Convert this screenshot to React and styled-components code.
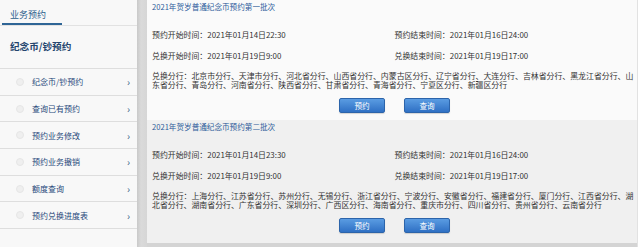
import React from "react";
import styled, { createGlobalStyle } from "styled-components";

const GlobalStyle = createGlobalStyle`
  html, body {
    margin: 0;
    padding: 0;
    background: #ffffff;
  }
  body {
    font-family: "Noto Sans CJK SC", "Noto Sans", sans-serif;
  }
`;

const batches = [
    {
        title: "2021年贺岁普通纪念币预约第一批次",
        bookStart: "2021年01月14日22:30",
        bookEnd: "2021年01月16日24:00",
        swapStart: "2021年01月19日9:00",
        swapEnd: "2021年01月19日17:00",
        branches:
            "北京市分行、天津市分行、河北省分行、山西省分行、内蒙古区分行、辽宁省分行、大连分行、吉林省分行、黑龙江省分行、山东省分行、青岛分行、河南省分行、陕西省分行、甘肃省分行、青海省分行、宁夏区分行、新疆区分行",
        tone: "#fafafa",
    },
    {
        title: "2021年贺岁普通纪念币预约第二批次",
        bookStart: "2021年01月14日23:30",
        bookEnd: "2021年01月16日24:00",
        swapStart: "2021年01月19日9:00",
        swapEnd: "2021年01月19日17:00",
        branches:
            "上海分行、江苏省分行、苏州分行、无锡分行、浙江省分行、宁波分行、安徽省分行、福建省分行、厦门分行、江西省分行、湖北省分行、湖南省分行、广东省分行、深圳分行、广西区分行、海南省分行、重庆市分行、四川省分行、贵州省分行、云南省分行",
        tone: "#f0f0f0",
    },
];

const menu = ["纪念币/钞预约", "查询已有预约", "预约业务修改", "预约业务撤销", "额度查询", "预约兑换进度表"];

const App = () => {
    return (
        <>
            <GlobalStyle />
            <SPage>
                <SSidebar>
                    <STabBar>
                        <STab>业务预约</STab>
                    </STabBar>
                    <SSideTitle>纪念币/钞预约</SSideTitle>
                    <SMenu>
                        {menu.map((item) => (
                            <SMenuItem key={item}>
                                <SDot />
                                <SMenuText>{item}</SMenuText>
                                <SChevron>›</SChevron>
                            </SMenuItem>
                        ))}
                    </SMenu>
                </SSidebar>
                <SGutter />
                <SMain>
                    {batches.map((batch, i) => (
                        <SBatch key={batch.title} tone={batch.tone} last={i === batches.length - 1}>
                            <SBatchTitle>{batch.title}</SBatchTitle>
                            <SInfoGrid>
                                <SInfo>预约开始时间：{batch.bookStart}</SInfo>
                                <SInfo>预约结束时间：{batch.bookEnd}</SInfo>
                                <SInfo>兑换开始时间：{batch.swapStart}</SInfo>
                                <SInfo>兑换结束时间：{batch.swapEnd}</SInfo>
                            </SInfoGrid>
                            <SBranches>兑换分行：{batch.branches}</SBranches>
                            <SButtonRow>
                                <SButton>预约</SButton>
                                <SButton>查询</SButton>
                            </SButtonRow>
                        </SBatch>
                    ))}
                    <SBottomBand />
                </SMain>
            </SPage>
        </>
    );
};

export default App;

const SPage = styled.div`
    display: flex;
    width: 640px;
    height: 247px;
    overflow: hidden;
`;

const SSidebar = styled.div`
    width: 137px;
    flex-shrink: 0;
    background: #f8f8f8;
    display: flex;
    flex-direction: column;
`;

const STabBar = styled.div`
    height: 25px;
    border-bottom: 1px solid #e2e2e2;
    display: flex;
    align-items: flex-end;
    padding-left: 2px;
`;

const STab = styled.div`
    width: 60px;
    padding-left: 8px;
    height: 23px;
    line-height: 26px;
    font-size: 9px;
    color: #2b5d8c;
    border-bottom: 2px solid #2f6596;
    box-sizing: border-box;
`;

const SSideTitle = styled.div`
    height: 42px;
    line-height: 41px;
    padding-left: 10px;
    font-size: 9.6px;
    font-weight: bold;
    color: #24456e;
    border-bottom: 1px solid #dedede;
`;

const SMenu = styled.div`
    display: flex;
    flex-direction: column;
`;

const SMenuItem = styled.div`
    display: flex;
    align-items: center;
    height: 25.7px;
    border-bottom: 1px solid #dedede;
    padding: 0 7px 0 16px;
`;

const SDot = styled.span`
    width: 8px;
    height: 8px;
    border-radius: 50%;
    background: #efefef;
    border: 1px solid #e6e6e6;
    box-sizing: border-box;
`;

const SMenuText = styled.span`
    flex: 1;
    margin-left: 8px;
    font-size: 8px;
    color: #27487a;
`;

const SChevron = styled.span`
    font-size: 10px;
    color: #3b5a85;
`;

const SGutter = styled.div`
    width: 10px;
    flex-shrink: 0;
    background: linear-gradient(to right, #c9c9c9, #dadada 40%, #d6d6d6);
`;

const SMain = styled.div`
    width: 490px;
    flex-shrink: 0;
    display: flex;
    flex-direction: column;
    border-right: 1px solid #e2e2e2;
`;

const SBatch = styled.div`
    background: ${(props) => props.tone};
    height: ${(props) => (props.last ? "auto" : "120px")};
    flex: ${(props) => (props.last ? 1 : "none")};
    box-sizing: border-box;
    padding: 1px 0 0 5px;
    display: flex;
    flex-direction: column;
`;

const SBatchTitle = styled.div`
    font-size: 7.6px;
    line-height: 11px;
    color: #2d5b9a;
`;

const SInfoGrid = styled.div`
    display: grid;
    grid-template-columns: 1fr 1fr;
    row-gap: 10px;
    margin-top: 17px;
`;

const SInfo = styled.div`
    font-size: 7.9px;
    line-height: 11px;
    color: #333333;
    white-space: nowrap;
`;

const SBranches = styled.div`
    margin-top: 9.5px;
    font-size: 7.9px;
    line-height: 9.5px;
    color: #333333;
    width: 485px;
`;

const SButtonRow = styled.div`
    display: flex;
    justify-content: center;
    gap: 19px;
    margin-top: 8.5px;
`;

const SButton = styled.div`
    width: 46px;
    height: 15px;
    box-sizing: border-box;
    border: 1px solid #2c64aa;
    border-radius: 2px;
    background: linear-gradient(#5a9ce2, #2f70c4);
    color: #ffffff;
    font-size: 7.6px;
    line-height: 13px;
    text-align: center;
    box-shadow: 0 1px 1px rgba(0, 0, 0, 0.15);
`;

const SBottomBand = styled.div`
    height: 4px;
    flex-shrink: 0;
    background: #d4d4d4;
`;
